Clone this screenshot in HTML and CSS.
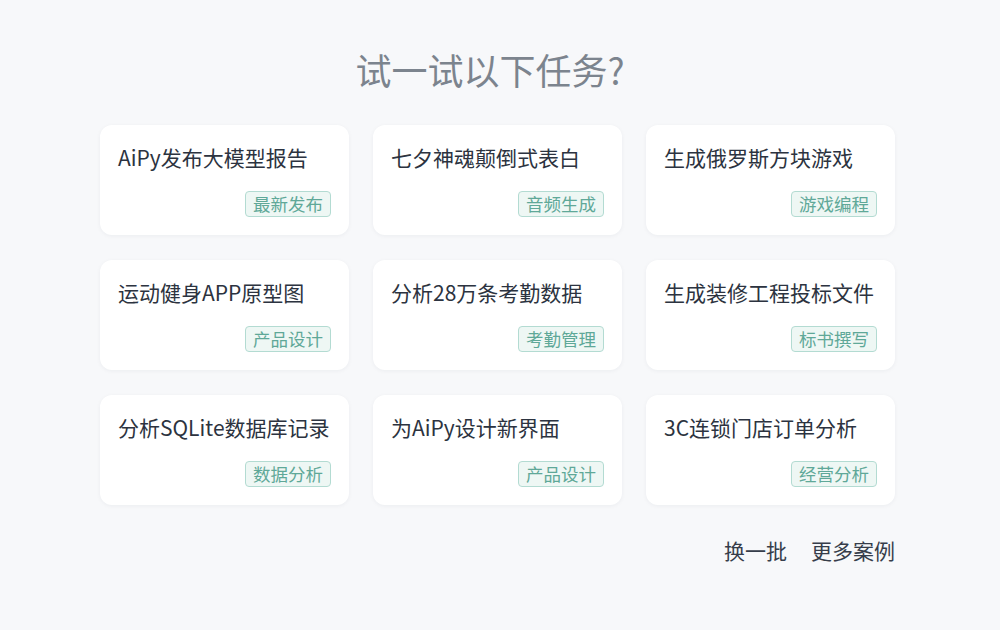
FILE: index.html
```html
<!DOCTYPE html>
<html lang="zh">
<head>
<meta charset="utf-8">
<link rel="stylesheet" href="styles.css">
</head>
<body>
<main class="page">
  <h1 class="title">试一试以下任务?</h1>
  <section class="grid">
    <div class="card"><div class="card-title">AiPy发布大模型报告</div><span class="tag">最新发布</span></div>
    <div class="card"><div class="card-title">七夕神魂颠倒式表白</div><span class="tag">音频生成</span></div>
    <div class="card"><div class="card-title">生成俄罗斯方块游戏</div><span class="tag">游戏编程</span></div>
    <div class="card"><div class="card-title">运动健身APP原型图</div><span class="tag">产品设计</span></div>
    <div class="card"><div class="card-title">分析28万条考勤数据</div><span class="tag">考勤管理</span></div>
    <div class="card"><div class="card-title">生成装修工程投标文件</div><span class="tag">标书撰写</span></div>
    <div class="card"><div class="card-title">分析SQLite数据库记录</div><span class="tag">数据分析</span></div>
    <div class="card"><div class="card-title">为AiPy设计新界面</div><span class="tag">产品设计</span></div>
    <div class="card"><div class="card-title">3C连锁门店订单分析</div><span class="tag">经营分析</span></div>
  </section>
  <div class="actions">
    <span class="action">换一批</span>
    <span class="action">更多案例</span>
  </div>
</main>
</body>
</html>
```
FILE: styles.css
```css
html, body {
  margin: 0;
  padding: 0;
  background: #f7f8fa;
  font-family: "Noto Sans CJK SC", "Noto Sans", sans-serif;
}
.page {
  width: 795px;
  margin-left: 100px;
  padding-top: 45px;
}
.title {
  margin: 0 0 31px 0;
  padding-right: 15px;
  text-align: center;
  font-size: 36px;
  line-height: 49px;
  font-weight: 400;
  color: #7c848e;
}
.grid {
  display: grid;
  grid-template-columns: repeat(3, 249px);
  column-gap: 24px;
  row-gap: 25px;
}
.card {
  height: 110px;
  box-sizing: border-box;
  background: #ffffff;
  border-radius: 12px;
  box-shadow: 0 1px 4px rgba(20, 30, 50, 0.05);
  padding: 17px 18px 18px 18px;
  display: flex;
  flex-direction: column;
  justify-content: space-between;
  align-items: flex-start;
}
.card-title {
  font-size: 21px;
  line-height: 30px;
  color: #2c3340;
  white-space: nowrap;
}
.tag {
  align-self: flex-end;
  box-sizing: border-box;
  height: 26px;
  line-height: 24px;
  padding: 0 7px;
  font-size: 17.5px;
  color: #5fa898;
  background: #eef7f4;
  border: 1px solid #b3dbd2;
  border-radius: 4px;
}
.actions {
  margin-top: 31px;
  display: flex;
  justify-content: flex-end;
  gap: 24px;
}
.action {
  font-size: 21px;
  line-height: 28px;
  color: #363d4a;
}
```
